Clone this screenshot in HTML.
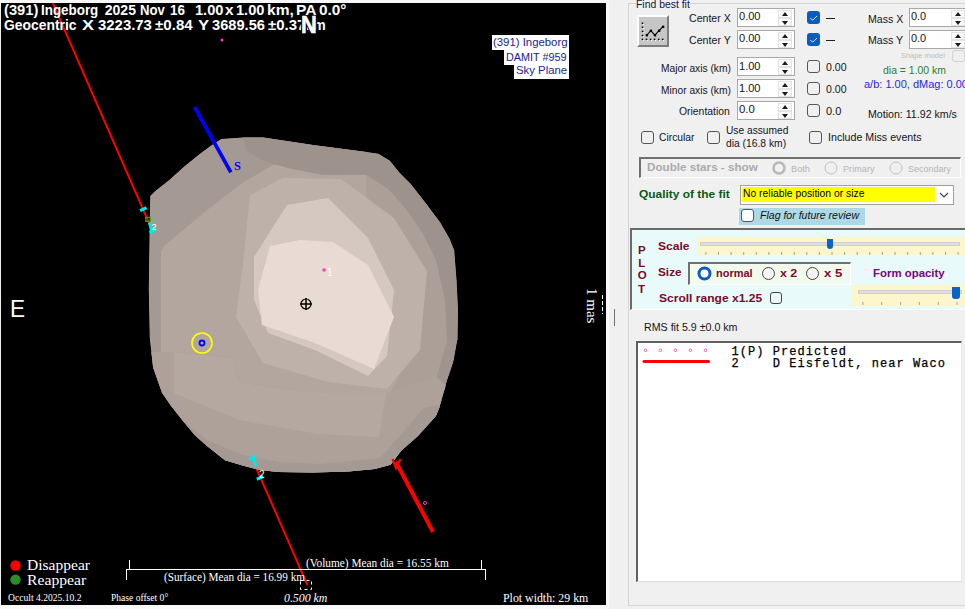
<!DOCTYPE html>
<html><head><meta charset="utf-8">
<style>
*{margin:0;padding:0;box-sizing:border-box}
html,body{width:965px;height:609px;overflow:hidden;background:#f0f0f0;font-family:"Liberation Sans",sans-serif}
.a{position:absolute;white-space:nowrap;line-height:1}
.t{position:absolute;white-space:pre;line-height:1;transform-origin:0 0}
#plot{position:absolute;left:1px;top:3px;width:605px;height:602px;background:#000;overflow:hidden}
.spin{position:absolute;background:#fff;border:1px solid #a8a8a8;height:19px}
.spin i{position:absolute;right:2px;top:1px;width:14px;height:8px;border:1px solid #e4e4e4;background:#fcfcfc}
.spin b{position:absolute;right:2px;top:9px;width:14px;height:8px;border:1px solid #e4e4e4;background:#fcfcfc}
.spin i:before{content:"";position:absolute;left:3px;top:1px;border-left:3.5px solid transparent;border-right:3.5px solid transparent;border-bottom:4px solid #1a1a1a}
.spin b:before{content:"";position:absolute;left:3px;top:1.5px;border-left:3.5px solid transparent;border-right:3.5px solid transparent;border-top:4px solid #1a1a1a}
.chk{position:absolute;width:12.5px;height:12.5px;border:1px solid #555;border-radius:3px;background:transparent}
.chkb{position:absolute;width:13px;height:13px;border-radius:3px;background:#0b5cc0}
</style></head><body>
<div style="position:absolute;left:606px;top:0;width:3px;height:609px;background:#fbfbfb"></div>
<div style="position:absolute;left:0;top:605px;width:609px;height:4px;background:#fafafa"></div>
<div style="position:absolute;left:0;top:0;width:609px;height:3px;background:#f8f8f8"></div>
<div id="plot">
<svg width="605" height="602" viewBox="1 3 605 602" style="position:absolute;left:0;top:0">
<line x1="52.8" y1="3" x2="307.4" y2="585" stroke="#ff0000" stroke-width="2"/>
<defs><clipPath id="ast"><polygon points="150.3,196.0 154.8,191.5 169.6,179.7 184.3,166.4 199.1,154.6 210.9,145.7 221.3,139.0 243.4,137.6 263.2,137.4 312.9,144.9 362.7,151.5 378.4,153.8 389.9,160.7 399.1,172.2 410.6,183.7 426.6,204.3 440.4,222.7 449.6,238.8 454.2,250.3 456.5,280.0 458.0,310.0 457.5,340.0 453.5,362.0 447.4,380.0 439.2,407.9 435.9,416.1 417.9,435.9 401.4,450.6 390.6,464.7 374.8,469.1 348.3,471.4 313.1,472.6 277.9,472.1 260.2,470.0 242.6,465.5 225.0,460.3 206.7,445.7 194.9,435.2 181.8,419.4 171.3,406.3 162.1,393.1 157.5,380.0 153.1,367.6 149.8,338.0 148.8,288.7 149.8,222.9"/></clipPath></defs><g clip-path="url(#ast)">
<polygon fill="#a0958e" points="150.3,196.0 154.8,191.5 169.6,179.7 184.3,166.4 199.1,154.6 210.9,145.7 221.3,139.0 243.4,137.6 263.2,137.4 312.9,144.9 362.7,151.5 378.4,153.8 389.9,160.7 399.1,172.2 410.6,183.7 426.6,204.3 440.4,222.7 449.6,238.8 454.2,250.3 456.5,280.0 458.0,310.0 457.5,340.0 453.5,362.0 447.4,380.0 439.2,407.9 435.9,416.1 417.9,435.9 401.4,450.6 390.6,464.7 374.8,469.1 348.3,471.4 313.1,472.6 277.9,472.1 260.2,470.0 242.6,465.5 225.0,460.3 206.7,445.7 194.9,435.2 181.8,419.4 171.3,406.3 162.1,393.1 157.5,380.0 153.1,367.6 149.8,338.0 148.8,288.7 149.8,222.9"/>
<polygon fill="#a59a93" points="140.0,200.0 221.0,130.0 263.0,130.0 313.0,138.0 366.0,145.0 366.0,175.0 313.0,165.0 273.0,165.0 242.0,183.0 207.0,210.0 164.0,246.0 161.0,354.0 175.0,395.0 240.0,440.0 320.0,450.0 390.0,440.0 440.0,400.0 460.0,400.0 400.0,480.0 140.0,480.0"/>
<polygon fill="#b2a69e" points="161.0,252.0 164.0,246.0 207.0,210.0 242.0,183.0 273.0,165.0 313.0,165.0 366.0,175.0 395.0,205.0 420.0,240.0 438.0,290.0 440.0,350.0 420.0,392.0 386.0,400.0 330.0,395.0 284.0,389.0 239.0,382.0 232.0,358.0 174.0,352.0 161.0,352.0"/>
<polygon fill="#9d928c" points="246.6,149.9 263.2,160.7 288.0,168.1 321.2,174.8 366.0,175.0 387.6,188.3 406.0,209.0 422.0,232.0 436.0,260.0 445.0,300.0 447.0,340.0 470.0,340.0 470.0,140.0 240.0,130.0"/>
<polygon fill="#ab9f97" points="366.0,175.0 387.6,188.3 406.0,209.0 422.0,232.0 436.0,260.0 445.0,300.0 447.0,340.0 436.0,380.0 423.0,408.0 406.0,429.0 392.0,449.0 386.0,400.0 413.0,350.0 420.0,294.0 414.0,263.0 393.0,240.0 366.0,220.0"/>
<polygon fill="#bdb1a9" points="250.0,195.0 283.0,178.0 341.0,179.0 394.0,218.0 427.0,271.0 420.0,350.0 387.0,389.0 328.0,382.0 263.0,363.0 236.0,317.0 243.0,264.0"/>
<polygon fill="#d5c8c0" points="254.0,257.0 287.0,205.0 328.0,198.0 368.0,238.0 394.0,290.0 387.0,356.0 368.0,376.0 315.0,350.0 268.0,333.0 254.0,300.0"/>
<polygon fill="#e9dbd3" points="270.0,246.0 300.0,240.0 333.0,242.0 368.0,265.0 394.0,317.0 374.0,369.0 315.0,343.0 262.0,325.0 258.0,290.0"/>
<polygon fill="#ada199" points="140.0,352.0 174.0,352.0 232.0,358.0 239.0,382.0 284.0,389.0 325.0,393.0 386.0,393.0 436.0,376.0 460.0,400.0 460.0,480.0 140.0,480.0"/>
<polygon fill="#b4a8a0" points="174.0,393.0 239.0,420.0 277.0,427.0 318.0,434.0 379.0,437.0 386.0,393.0 325.0,393.0 284.0,389.0 239.0,382.0 232.0,358.0 174.0,352.0"/>
<polygon fill="#a59a93" points="140.0,400.0 181.8,419.4 206.7,440.0 242.6,455.0 280.0,462.0 320.0,464.0 380.0,458.0 406.0,429.0 423.0,408.0 470.0,400.0 470.0,480.0 140.0,480.0"/>
</g>
<line x1="194.5" y1="107" x2="230.9" y2="172.3" stroke="#0000ff" stroke-width="3.7"/>
<line x1="396" y1="462" x2="433" y2="532" stroke="#ff0000" stroke-width="4"/>
<polyline points="392.5,459 396,468 400.5,459" fill="none" stroke="#ff0000" stroke-width="2.2"/>
<path d="M140.1,210.6 L146.5,207.8 M149.5,222.5 L152,231 M149.5,232.6 L155.9,229.8" stroke="#00e8e8" stroke-width="3.2"/>
<rect x="145.8" y="217.4" width="4.5" height="4" fill="none" stroke="#00c000" stroke-width="1.2"/>
<path d="M249,459.2 L255.4,456.4 M253.5,458 L255.5,466 M256.8,479.2 L263.2,476.4" stroke="#00e8e8" stroke-width="3.2"/>
<circle cx="222" cy="40" r="1.5" fill="#ff40a0"/>
<circle cx="425" cy="503" r="1.5" fill="none" stroke="#ff40c0" stroke-width="1"/>
<circle cx="324" cy="270" r="1.8" fill="#ff40a0"/>
<circle cx="202" cy="343" r="10" fill="none" stroke="#ffff00" stroke-width="1.6"/>
<circle cx="202" cy="343" r="2.5" fill="none" stroke="#0000ff" stroke-width="1.8"/>
<circle cx="306" cy="304" r="5" fill="none" stroke="#000" stroke-width="1.2"/>
<path d="M300,304 H312 M306,298 V310" stroke="#000" stroke-width="1.5"/>
<path d="M126,569.5 H486 M126.5,569 V580 M129.5,560 V569 M481.5,560 V569 M485.5,569 V580" stroke="#fff" stroke-width="1" fill="none"/>
<rect x="300.5" y="580.5" width="11" height="9" fill="none" stroke="#fff" stroke-width="1" stroke-dasharray="3,3"/>
<circle cx="15.5" cy="565.5" r="5.2" fill="#ff0000"/>
<circle cx="15.5" cy="579.6" r="5.2" fill="#2a8c2a"/>
<path d="M602.5,295 V314" stroke="#fff" stroke-width="1" stroke-dasharray="4,2"/>
</svg>
</div>
<div class="a" style="left:492px;top:35px;width:77px;height:15px;background:#fff"></div>
<div class="a" style="left:504px;top:50px;width:65px;height:15px;background:#fff"></div>
<div class="a" style="left:514px;top:64px;width:55px;height:15px;background:#fff"></div>
<div class="a" style="left:234px;top:160px;color:#0000ff;font-weight:bold;font-size:12.5px;font-family:'Liberation Serif',serif">S</div>
<div class="a" style="left:327px;top:268px;color:#fff;font-size:10px">1</div>
<div class="a" style="left:151.5px;top:221.5px;color:#fff;font-size:9.5px">2</div>
<div class="a" style="left:259px;top:470px;color:#fff;font-size:10px">2</div>
<div class="a" style="left:599px;top:288px;color:#fff;font-size:15px;font-family:'Liberation Serif',serif;transform-origin:0 0;transform:rotate(90deg)">1 mas</div>

<!-- RIGHT PANEL -->
<div class="a" style="left:628px;top:3px;width:400px;height:603px;border-left:1px solid #d4d4d4;border-top:1px solid #d4d4d4;border-bottom:1px solid #d4d4d4"></div>
<div class="a" style="left:637px;top:15px;width:32px;height:32px;background:#c6c6c6;border-top:2px solid #fdfdfd;border-left:2px solid #fdfdfd;border-right:2px solid #7c7c7c;border-bottom:2px solid #7c7c7c"></div>
<svg class="a" style="left:637px;top:15px" width="32" height="32"><rect x="4.7" y="7.499999999999999" width="1.6" height="1.6" fill="#000"/><rect x="5.7" y="8.799999999999999" width="1.2" height="1.2" fill="#fff"/><rect x="4.7" y="11.5" width="1.6" height="1.6" fill="#000"/><rect x="5.7" y="12.799999999999999" width="1.2" height="1.2" fill="#fff"/><rect x="4.7" y="15.7" width="1.6" height="1.6" fill="#000"/><rect x="5.7" y="17.0" width="1.2" height="1.2" fill="#fff"/><rect x="4.7" y="19.7" width="1.6" height="1.6" fill="#000"/><rect x="5.7" y="21.0" width="1.2" height="1.2" fill="#fff"/><rect x="4.7" y="23.6" width="1.6" height="1.6" fill="#000"/><rect x="5.7" y="24.9" width="1.2" height="1.2" fill="#fff"/><rect x="8.700000000000001" y="23.6" width="1.6" height="1.6" fill="#000"/><rect x="9.700000000000001" y="24.9" width="1.2" height="1.2" fill="#fff"/><rect x="12.8" y="23.6" width="1.6" height="1.6" fill="#000"/><rect x="13.8" y="24.9" width="1.2" height="1.2" fill="#fff"/><rect x="16.8" y="23.6" width="1.6" height="1.6" fill="#000"/><rect x="17.8" y="24.9" width="1.2" height="1.2" fill="#fff"/><rect x="20.900000000000002" y="23.6" width="1.6" height="1.6" fill="#000"/><rect x="21.900000000000002" y="24.9" width="1.2" height="1.2" fill="#fff"/><rect x="24.900000000000002" y="23.6" width="1.6" height="1.6" fill="#000"/><rect x="25.900000000000002" y="24.9" width="1.2" height="1.2" fill="#fff"/><polyline points="9.8,20.1 13.8,15.7 17.9,20.1 22,15.7 26,11.7" fill="none" stroke="#000" stroke-width="1.1"/><rect x="8.700000000000001" y="19.0" width="2.4" height="2.4" fill="#000"/><rect x="12.700000000000001" y="14.6" width="2.4" height="2.4" fill="#000"/><rect x="16.799999999999997" y="19.0" width="2.4" height="2.4" fill="#000"/><rect x="20.9" y="14.6" width="2.4" height="2.4" fill="#000"/><rect x="24.9" y="10.6" width="2.4" height="2.4" fill="#000"/></svg>
<div class="spin" style="left:737px;top:8px;width:58px"><i></i><b></b></div>
<div class="spin" style="left:737px;top:30px;width:58px"><i></i><b></b></div>
<div class="chkb" style="left:807px;top:11px;height:12.5px"><svg width="13" height="13"><polyline points="3.3,6.3 5.9,8.1 10,4" fill="none" stroke="#d8e8ff" stroke-width="1"/></svg></div>
<div class="chkb" style="left:807px;top:33px;height:12.5px"><svg width="13" height="13"><polyline points="3.3,6.3 5.9,8.1 10,4" fill="none" stroke="#d8e8ff" stroke-width="1"/></svg></div>
<div class="spin" style="left:909px;top:8px;width:60px"><i style="right:3px"></i><b style="right:3px"></b></div>
<div class="spin" style="left:909px;top:30px;width:60px"><i style="right:3px"></i><b style="right:3px"></b></div>
<div class="a" style="left:826px;top:18px;width:9px;height:1px;background:#202020"></div>
<div class="a" style="left:826px;top:40px;width:9px;height:1px;background:#202020"></div>
<div class="chk" style="left:952px;top:50px;width:13px;height:12px;border-color:#d0d0d0"></div>
<div class="spin" style="left:737px;top:57px;width:58px"><i></i><b></b></div>
<div class="spin" style="left:737px;top:79px;width:58px"><i></i><b></b></div>
<div class="spin" style="left:737px;top:101px;width:58px"><i></i><b></b></div>
<div class="chk" style="left:807px;top:60px"></div>
<div class="chk" style="left:807px;top:82px"></div>
<div class="chk" style="left:807px;top:104px"></div>
<div class="chk" style="left:641px;top:131px"></div>
<div class="chk" style="left:707px;top:131px"></div>
<div class="chk" style="left:809px;top:131px"></div>

<div class="a" style="left:639px;top:157px;width:322px;height:21px;border-top:2px solid #707070;border-left:2px solid #707070;border-right:1px solid #fff;border-bottom:1px solid #fff"></div>
<svg class="a" style="left:772px;top:161px" width="14" height="14"><circle cx="7" cy="7" r="5.5" fill="none" stroke="#b8b8b8" stroke-width="2.5"/></svg>
<svg class="a" style="left:824px;top:161px" width="14" height="14"><circle cx="7" cy="7" r="6" fill="none" stroke="#c0c0c0" stroke-width="1"/></svg>
<svg class="a" style="left:889px;top:161px" width="14" height="14"><circle cx="7" cy="7" r="6" fill="none" stroke="#c0c0c0" stroke-width="1"/></svg>

<div class="a" style="left:740px;top:185px;width:214px;height:20px;background:#fff;border:1px solid #a0a0a0"></div>
<div class="a" style="left:742px;top:187px;width:193px;height:15px;background:#ffff00"></div>
<svg class="a" style="left:938px;top:190px" width="12" height="10"><polyline points="2,3 6,7 10,3" fill="none" stroke="#444" stroke-width="1.2"/></svg>
<div class="a" style="left:739px;top:208px;width:126px;height:17px;background:#add8e6"></div>
<div class="chk" style="left:741px;top:209px;background:#fff"></div>

<div class="a" style="left:630px;top:228px;width:340px;height:82px;background:#e8fafa;border-top:2px solid #6a6a6a;border-left:2px solid #6a6a6a;border-bottom:1px solid #fff"></div>
<div class="a" style="left:697px;top:237px;width:268px;height:18px;background:#fdf6cc"></div>
<div class="a" style="left:700px;top:242px;width:260px;height:4px;background:#dedede;border:1px solid #cfcfcf"></div>
<div class="a" style="left:827px;top:239px;width:6px;height:10px;background:#0a64c8;border-radius:0 0 3px 3px"></div>
<div class="a" style="left:688px;top:262px;width:163px;height:23px;background:#f2faee;border-top:2px solid #707070;border-left:2px solid #707070;border-right:1px solid #fff;border-bottom:1px solid #fff"></div>
<svg class="a" style="left:697px;top:266px" width="15" height="15"><circle cx="7.5" cy="7.5" r="5.5" fill="#fff" stroke="#0a5cc0" stroke-width="3"/><circle cx="7.5" cy="7.5" r="2.3" fill="#fff"/></svg>
<svg class="a" style="left:761px;top:266px" width="15" height="15"><circle cx="7.5" cy="7.5" r="6" fill="#f4f4f4" stroke="#444" stroke-width="1"/></svg>
<svg class="a" style="left:805px;top:266px" width="15" height="15"><circle cx="7.5" cy="7.5" r="6" fill="#f4f4f4" stroke="#444" stroke-width="1"/></svg>
<div class="chk" style="left:770px;top:292px;width:12px;height:12px;border-color:#444"></div>
<div class="a" style="left:852px;top:285px;width:113px;height:21px;background:#fdf6cc"></div>
<div class="a" style="left:858px;top:290px;width:104px;height:4px;background:#dedede;border:1px solid #cfcfcf"></div>
<div class="a" style="left:952px;top:287px;width:8px;height:12px;background:#0a64c8;border-radius:0 0 3px 3px"></div>

<div class="a" style="left:614px;top:309px;width:1px;height:17px;background:#707070"></div>
<div class="a" style="left:636px;top:341px;width:326px;height:241px;background:#fff;border-top:2px solid #606060;border-left:2px solid #606060;border-right:1px solid #e8e8e8;border-bottom:1px solid #e0e0e0"></div>
<svg class="a" style="left:640px;top:345px" width="80" height="22"><g fill="none" stroke="#ff60b0" stroke-width="1"><circle cx="5.4" cy="5.3" r="1.3"/><circle cx="20.4" cy="5.3" r="1.3"/><circle cx="35.4" cy="5.3" r="1.3"/><circle cx="50.4" cy="5.3" r="1.3"/><circle cx="65.5" cy="5.3" r="1.3"/></g><line x1="4" y1="16.5" x2="68.5" y2="16.5" stroke="#ff0000" stroke-width="3" stroke-linecap="round"/></svg>
<svg class="a" style="left:0;top:0" width="965" height="609" viewBox="0 0 965 609"><g stroke="#a0a0a0" stroke-width="1" transform="translate(0.5,0)"><line x1="705.4" y1="252" x2="705.4" y2="255" /><line x1="718.0" y1="252" x2="718.0" y2="255" /><line x1="730.6" y1="252" x2="730.6" y2="255" /><line x1="743.2" y1="252" x2="743.2" y2="255" /><line x1="755.8" y1="252" x2="755.8" y2="255" /><line x1="768.4" y1="252" x2="768.4" y2="255" /><line x1="781.1" y1="252" x2="781.1" y2="255" /><line x1="793.7" y1="252" x2="793.7" y2="255" /><line x1="806.3" y1="252" x2="806.3" y2="255" /><line x1="818.9" y1="252" x2="818.9" y2="255" /><line x1="831.5" y1="252" x2="831.5" y2="255" /><line x1="844.1" y1="252" x2="844.1" y2="255" /><line x1="856.7" y1="252" x2="856.7" y2="255" /><line x1="869.3" y1="252" x2="869.3" y2="255" /><line x1="881.9" y1="252" x2="881.9" y2="255" /><line x1="894.5" y1="252" x2="894.5" y2="255" /><line x1="907.2" y1="252" x2="907.2" y2="255" /><line x1="919.8" y1="252" x2="919.8" y2="255" /><line x1="932.4" y1="252" x2="932.4" y2="255" /><line x1="945.0" y1="252" x2="945.0" y2="255" /><line x1="957.6" y1="252" x2="957.6" y2="255" /><line x1="862.4" y1="302" x2="862.4" y2="305" /><line x1="881.2" y1="302" x2="881.2" y2="305" /><line x1="900.1" y1="302" x2="900.1" y2="305" /><line x1="918.9" y1="302" x2="918.9" y2="305" /><line x1="937.8" y1="302" x2="937.8" y2="305" /><line x1="956.6" y1="302" x2="956.6" y2="305" /></g></svg>
<div class="t" id="h1_0" style="left:4.10px;top:2.65px;font-size:14px;font-family:'Liberation Sans',sans-serif;font-weight:bold;color:#fff;transform:scaleX(1.0493);">(391)</div>
<div class="t" id="h1_1" style="left:40.80px;top:2.65px;font-size:14px;font-family:'Liberation Sans',sans-serif;font-weight:bold;color:#fff;transform:scaleX(0.9567);">Ingeborg</div>
<div class="t" id="h1_2" style="left:104.80px;top:2.65px;font-size:14px;font-family:'Liberation Sans',sans-serif;font-weight:bold;color:#fff;">2025</div>
<div class="t" id="h1_3" style="left:140.20px;top:2.65px;font-size:14px;font-family:'Liberation Sans',sans-serif;font-weight:bold;color:#fff;transform:scaleX(0.9375);">Nov</div>
<div class="t" id="h1_4" style="left:170.00px;top:2.65px;font-size:14px;font-family:'Liberation Sans',sans-serif;font-weight:bold;color:#fff;transform:scaleX(0.9565);">16</div>
<div class="t" id="h1_5" style="left:194.80px;top:2.65px;font-size:14px;font-family:'Liberation Sans',sans-serif;font-weight:bold;color:#fff;transform:scaleX(1.0422);">1.00</div>
<div class="t" id="h1_6" style="left:225.40px;top:2.65px;font-size:14px;font-family:'Liberation Sans',sans-serif;font-weight:bold;color:#fff;transform:scaleX(1.1030);">x</div>
<div class="t" id="h1_7" style="left:236.20px;top:2.65px;font-size:14px;font-family:'Liberation Sans',sans-serif;font-weight:bold;color:#fff;transform:scaleX(1.0422);">1.00</div>
<div class="t" id="h1_8" style="left:267.30px;top:2.65px;font-size:14px;font-family:'Liberation Sans',sans-serif;font-weight:bold;color:#fff;transform:scaleX(1.1109);">km,</div>
<div class="t" id="h1_9" style="left:296.20px;top:2.65px;font-size:14px;font-family:'Liberation Sans',sans-serif;font-weight:bold;color:#fff;transform:scaleX(1.1128);">PA</div>
<div class="t" id="h1_10" style="left:318.90px;top:2.65px;font-size:14px;font-family:'Liberation Sans',sans-serif;font-weight:bold;color:#fff;transform:scaleX(1.0933);">0.0°</div>
<div class="t" id="h2_0" style="left:4.10px;top:18.05px;font-size:14px;font-family:'Liberation Sans',sans-serif;font-weight:bold;color:#fff;transform:scaleX(0.9926);">Geocentric</div>
<div class="t" id="h2_1" style="left:81.50px;top:18.05px;font-size:14px;font-family:'Liberation Sans',sans-serif;font-weight:bold;color:#fff;transform:scaleX(1.2843);">X</div>
<div class="t" id="h2_2" style="left:98.30px;top:18.05px;font-size:14px;font-family:'Liberation Sans',sans-serif;font-weight:bold;color:#fff;transform:scaleX(1.0650);">3223.73</div>
<div class="t" id="h2_3" style="left:154.70px;top:18.05px;font-size:14px;font-family:'Liberation Sans',sans-serif;font-weight:bold;color:#fff;transform:scaleX(1.0791);">±0.84</div>
<div class="t" id="h2_4" style="left:198.20px;top:18.05px;font-size:14px;font-family:'Liberation Sans',sans-serif;font-weight:bold;color:#fff;transform:scaleX(1.1987);">Y</div>
<div class="t" id="h2_5" style="left:211.60px;top:18.05px;font-size:14px;font-family:'Liberation Sans',sans-serif;font-weight:bold;color:#fff;transform:scaleX(1.0472);">3689.56</div>
<div class="t" id="h2_6" style="left:267.70px;top:18.05px;font-size:14px;font-family:'Liberation Sans',sans-serif;font-weight:bold;color:#fff;transform:scaleX(1.0676);">±0.37</div>
<div class="t" id="h2_7" style="left:306.40px;top:18.05px;font-size:14px;font-family:'Liberation Sans',sans-serif;font-weight:bold;color:#fff;transform:scaleX(0.9785);">km</div>
<div class="t" id="N" style="left:301.40px;top:14.11px;font-size:23.5px;font-family:'Liberation Sans',sans-serif;font-weight:bold;color:#fff;-webkit-text-stroke:0.6px #fff;text-shadow:-1.5px 0 0 #000,1.5px 0 0 #000;transform:scaleX(0.9303);">N</div>
<div class="t" id="E" style="left:10.20px;top:298.11px;font-size:23.5px;font-family:'Liberation Sans',sans-serif;font-weight:normal;color:#fff;transform:scaleX(0.9625);">E</div>
<div class="t" id="ib1" style="left:492.70px;top:37.21px;font-size:10.5px;font-family:'Liberation Sans',sans-serif;font-weight:normal;color:#1c1c8c;transform:scaleX(1.0814);">(391) Ingeborg</div>
<div class="t" id="ib2" style="left:506.10px;top:51.71px;font-size:10.5px;font-family:'Liberation Sans',sans-serif;font-weight:normal;color:#1c1c8c;transform:scaleX(1.0315);">DAMIT #959</div>
<div class="t" id="ib3" style="left:515.90px;top:65.21px;font-size:10.5px;font-family:'Liberation Sans',sans-serif;font-weight:normal;color:#1c1c8c;transform:scaleX(1.0808);">Sky Plane</div>
<div class="t" id="dis" style="left:26.80px;top:559.38px;font-size:14px;font-family:'Liberation Serif',serif;font-weight:normal;color:#fff;transform:scaleX(1.1098);">Disappear</div>
<div class="t" id="rea" style="left:26.80px;top:573.88px;font-size:14px;font-family:'Liberation Serif',serif;font-weight:normal;color:#fff;transform:scaleX(1.1200);">Reappear</div>
<div class="t" id="occ" style="left:7.50px;top:592.83px;font-size:10px;font-family:'Liberation Serif',serif;font-weight:normal;color:#fff;transform:scaleX(0.9588);">Occult 4.2025.10.2</div>
<div class="t" id="pho" style="left:111.40px;top:592.62px;font-size:10px;font-family:'Liberation Serif',serif;font-weight:normal;color:#fff;transform:scaleX(0.9546);">Phase offset 0°</div>
<div class="t" id="km5" style="left:283.90px;top:592.33px;font-size:12.5px;font-family:'Liberation Serif',serif;font-weight:normal;font-style:italic;color:#fff;transform:scaleX(0.9448);">0.500 km</div>
<div class="t" id="pw" style="left:503.30px;top:592.33px;font-size:12.5px;font-family:'Liberation Serif',serif;font-weight:normal;color:#fff;transform:scaleX(0.9483);">Plot width: 29 km</div>
<div class="t" id="vol" style="left:306.00px;top:558.47px;font-size:11.5px;font-family:'Liberation Serif',serif;font-weight:normal;color:#fff;transform:scaleX(0.9849);">(Volume) Mean dia = 16.55 km</div>
<div class="t" id="sur" style="left:164.20px;top:571.57px;font-size:11.5px;font-family:'Liberation Serif',serif;font-weight:normal;color:#fff;transform:scaleX(0.9761);">(Surface) Mean dia = 16.99 km</div>
<div class="t" id="fbf" style="left:636.40px;top:-1.01px;font-size:11px;font-family:'Liberation Sans',sans-serif;font-weight:normal;color:#141440;background:#f0f0f0;transform:scaleX(0.9462);">Find best fit</div>
<div class="t" id="cx" style="left:689.00px;top:13.22px;font-size:11.2px;font-family:'Liberation Sans',sans-serif;font-weight:normal;color:#141420;transform:scaleX(0.9466);">Center X</div>
<div class="t" id="cy" style="left:689.00px;top:35.32px;font-size:11.2px;font-family:'Liberation Sans',sans-serif;font-weight:normal;color:#141420;transform:scaleX(0.9510);">Center Y</div>
<div class="t" id="v1" style="left:738.70px;top:11.07px;font-size:11.5px;font-family:'Liberation Sans',sans-serif;font-weight:normal;color:#141420;transform:scaleX(0.9602);">0.00</div>
<div class="t" id="v2" style="left:738.70px;top:33.07px;font-size:11.5px;font-family:'Liberation Sans',sans-serif;font-weight:normal;color:#141420;transform:scaleX(0.9602);">0.00</div>
<div class="t" id="mx" style="left:868.00px;top:13.52px;font-size:11.2px;font-family:'Liberation Sans',sans-serif;font-weight:normal;color:#141420;transform:scaleX(0.9434);">Mass X</div>
<div class="t" id="my" style="left:868.00px;top:35.12px;font-size:11.2px;font-family:'Liberation Sans',sans-serif;font-weight:normal;color:#141420;transform:scaleX(0.9485);">Mass Y</div>
<div class="t" id="mv1" style="left:911.00px;top:11.07px;font-size:11.5px;font-family:'Liberation Sans',sans-serif;font-weight:normal;color:#141420;transform:scaleX(0.9500);">0.0</div>
<div class="t" id="mv2" style="left:911.00px;top:33.07px;font-size:11.5px;font-family:'Liberation Sans',sans-serif;font-weight:normal;color:#141420;transform:scaleX(0.9500);">0.0</div>
<div class="t" id="shm" style="left:900.90px;top:51.73px;font-size:8px;font-family:'Liberation Sans',sans-serif;font-weight:normal;color:#bcbcbc;transform:scaleX(0.9288);">Shape model</div>
<div class="t" id="maj" style="left:661.10px;top:62.62px;font-size:11.2px;font-family:'Liberation Sans',sans-serif;font-weight:normal;color:#141420;transform:scaleX(0.9130);">Major axis (km)</div>
<div class="t" id="min" style="left:661.10px;top:84.52px;font-size:11.2px;font-family:'Liberation Sans',sans-serif;font-weight:normal;color:#141420;transform:scaleX(0.9130);">Minor axis (km)</div>
<div class="t" id="ori" style="left:679.40px;top:105.92px;font-size:11.2px;font-family:'Liberation Sans',sans-serif;font-weight:normal;color:#141420;transform:scaleX(0.9281);">Orientation</div>
<div class="t" id="v3" style="left:738.70px;top:60.87px;font-size:11.5px;font-family:'Liberation Sans',sans-serif;font-weight:normal;color:#141420;transform:scaleX(0.9602);">1.00</div>
<div class="t" id="v4" style="left:738.70px;top:82.77px;font-size:11.5px;font-family:'Liberation Sans',sans-serif;font-weight:normal;color:#141420;transform:scaleX(0.9602);">1.00</div>
<div class="t" id="v5" style="left:738.70px;top:104.47px;font-size:11.5px;font-family:'Liberation Sans',sans-serif;font-weight:normal;color:#141420;transform:scaleX(0.9875);">0.0</div>
<div class="t" id="c1" style="left:825.90px;top:62.22px;font-size:11.2px;font-family:'Liberation Sans',sans-serif;font-weight:normal;color:#141420;transform:scaleX(0.9458);">0.00</div>
<div class="t" id="c2" style="left:825.90px;top:84.12px;font-size:11.2px;font-family:'Liberation Sans',sans-serif;font-weight:normal;color:#141420;transform:scaleX(0.9458);">0.00</div>
<div class="t" id="c3" style="left:825.90px;top:105.52px;font-size:11.2px;font-family:'Liberation Sans',sans-serif;font-weight:normal;color:#141420;transform:scaleX(0.9831);">0.0</div>
<div class="t" id="dia" style="left:882.80px;top:65.19px;font-size:11px;font-family:'Liberation Sans',sans-serif;font-weight:normal;color:#2f7d2f;transform:scaleX(0.9496);">dia = 1.00 km</div>
<div class="t" id="ab" style="left:864.00px;top:79.19px;font-size:11px;font-family:'Liberation Sans',sans-serif;font-weight:normal;color:#2828e0;">a/b: 1.00, dMag: 0.00</div>
<div class="t" id="mot" style="left:867.90px;top:109.19px;font-size:11px;font-family:'Liberation Sans',sans-serif;font-weight:normal;color:#141420;transform:scaleX(0.9650);">Motion: 11.92 km/s</div>
<div class="t" id="cir" style="left:659.40px;top:132.42px;font-size:11.2px;font-family:'Liberation Sans',sans-serif;font-weight:normal;color:#141420;transform:scaleX(0.9210);">Circular</div>
<div class="t" id="ua1" style="left:726.00px;top:125.49px;font-size:11px;font-family:'Liberation Sans',sans-serif;font-weight:normal;color:#141420;transform:scaleX(0.9277);">Use assumed</div>
<div class="t" id="ua2" style="left:726.00px;top:137.59px;font-size:11px;font-family:'Liberation Sans',sans-serif;font-weight:normal;color:#141420;transform:scaleX(0.9361);">dia (16.8 km)</div>
<div class="t" id="inc" style="left:827.60px;top:132.42px;font-size:11.2px;font-family:'Liberation Sans',sans-serif;font-weight:normal;color:#141420;transform:scaleX(0.9517);">Include Miss events</div>
<div class="t" id="dbl" style="left:647.40px;top:162.27px;font-size:11.5px;font-family:'Liberation Sans',sans-serif;font-weight:bold;color:#ababab;transform:scaleX(1.0139);">Double stars - show</div>
<div class="t" id="both" style="left:790.90px;top:164.98px;font-size:9px;font-family:'Liberation Sans',sans-serif;font-weight:normal;color:#b4b4b4;transform:scaleX(1.0262);">Both</div>
<div class="t" id="prim" style="left:842.70px;top:164.98px;font-size:9px;font-family:'Liberation Sans',sans-serif;font-weight:normal;color:#b4b4b4;transform:scaleX(1.0161);">Primary</div>
<div class="t" id="sec" style="left:907.90px;top:164.98px;font-size:9px;font-family:'Liberation Sans',sans-serif;font-weight:normal;color:#b4b4b4;transform:scaleX(0.9969);">Secondary</div>
<div class="t" id="qual" style="left:639.40px;top:189.17px;font-size:11.5px;font-family:'Liberation Sans',sans-serif;font-weight:bold;color:#0a5a14;transform:scaleX(1.0373);">Quality of the fit</div>
<div class="t" id="nrp" style="left:742.60px;top:188.07px;font-size:11.5px;font-family:'Liberation Sans',sans-serif;font-weight:normal;color:#000;transform:scaleX(0.9008);">No reliable position or size</div>
<div class="t" id="flag" style="left:759.50px;top:210.17px;font-size:11.5px;font-family:'Liberation Sans',sans-serif;font-weight:normal;font-style:italic;color:#111;transform:scaleX(0.9165);">Flag for future review</div>
<div class="t" id="sca" style="left:658.00px;top:241.07px;font-size:11.5px;font-family:'Liberation Sans',sans-serif;font-weight:bold;color:#7b0a2a;transform:scaleX(1.0511);">Scale</div>
<div class="t" id="siz" style="left:658.20px;top:266.87px;font-size:11.5px;font-family:'Liberation Sans',sans-serif;font-weight:bold;color:#7b0a2a;transform:scaleX(1.0254);">Size</div>
<div class="t" id="nor" style="left:716.40px;top:267.77px;font-size:11.5px;font-family:'Liberation Sans',sans-serif;font-weight:bold;color:#7b0a2a;transform:scaleX(0.9545);">normal</div>
<div class="t" id="x2" style="left:780.20px;top:267.77px;font-size:11.5px;font-family:'Liberation Sans',sans-serif;font-weight:bold;color:#7b0a2a;transform:scaleX(1.0813);">x 2</div>
<div class="t" id="x5" style="left:823.90px;top:267.77px;font-size:11.5px;font-family:'Liberation Sans',sans-serif;font-weight:bold;color:#7b0a2a;transform:scaleX(1.1438);">x 5</div>
<div class="t" id="fop" style="left:873.00px;top:268.47px;font-size:11.5px;font-family:'Liberation Sans',sans-serif;font-weight:bold;color:#800080;transform:scaleX(0.9928);">Form opacity</div>
<div class="t" id="scr" style="left:658.90px;top:292.67px;font-size:11.5px;font-family:'Liberation Sans',sans-serif;font-weight:bold;color:#7b0a2a;transform:scaleX(1.0472);">Scroll range x1.25</div>
<div class="t" id="P" style="left:638.00px;top:244.97px;font-size:11.5px;font-family:'Liberation Sans',sans-serif;font-weight:bold;color:#7b0a2a;">P</div>
<div class="t" id="L" style="left:638.20px;top:257.97px;font-size:11.5px;font-family:'Liberation Sans',sans-serif;font-weight:bold;color:#7b0a2a;">L</div>
<div class="t" id="O" style="left:637.70px;top:270.47px;font-size:11.5px;font-family:'Liberation Sans',sans-serif;font-weight:bold;color:#7b0a2a;">O</div>
<div class="t" id="Tt" style="left:638.00px;top:283.77px;font-size:11.5px;font-family:'Liberation Sans',sans-serif;font-weight:bold;color:#7b0a2a;">T</div>
<div class="t" id="rms" style="left:643.90px;top:322.27px;font-size:11.5px;font-family:'Liberation Sans',sans-serif;font-weight:normal;color:#141420;transform:scaleX(0.9266);">RMS fit 5.9 ±0.0 km</div>
<div class="t" id="l1" style="left:731.60px;top:346.20px;font-size:12px;font-family:'Liberation Mono',monospace;font-weight:normal;color:#000;letter-spacing:1.05px;-webkit-text-stroke:0.25px #000;">1(P) Predicted</div>
<div class="t" id="l2" style="left:731.60px;top:358.20px;font-size:12px;font-family:'Liberation Mono',monospace;font-weight:normal;color:#000;letter-spacing:1.05px;-webkit-text-stroke:0.25px #000;">2    D Eisfeldt, near Waco</div>
</body></html>
